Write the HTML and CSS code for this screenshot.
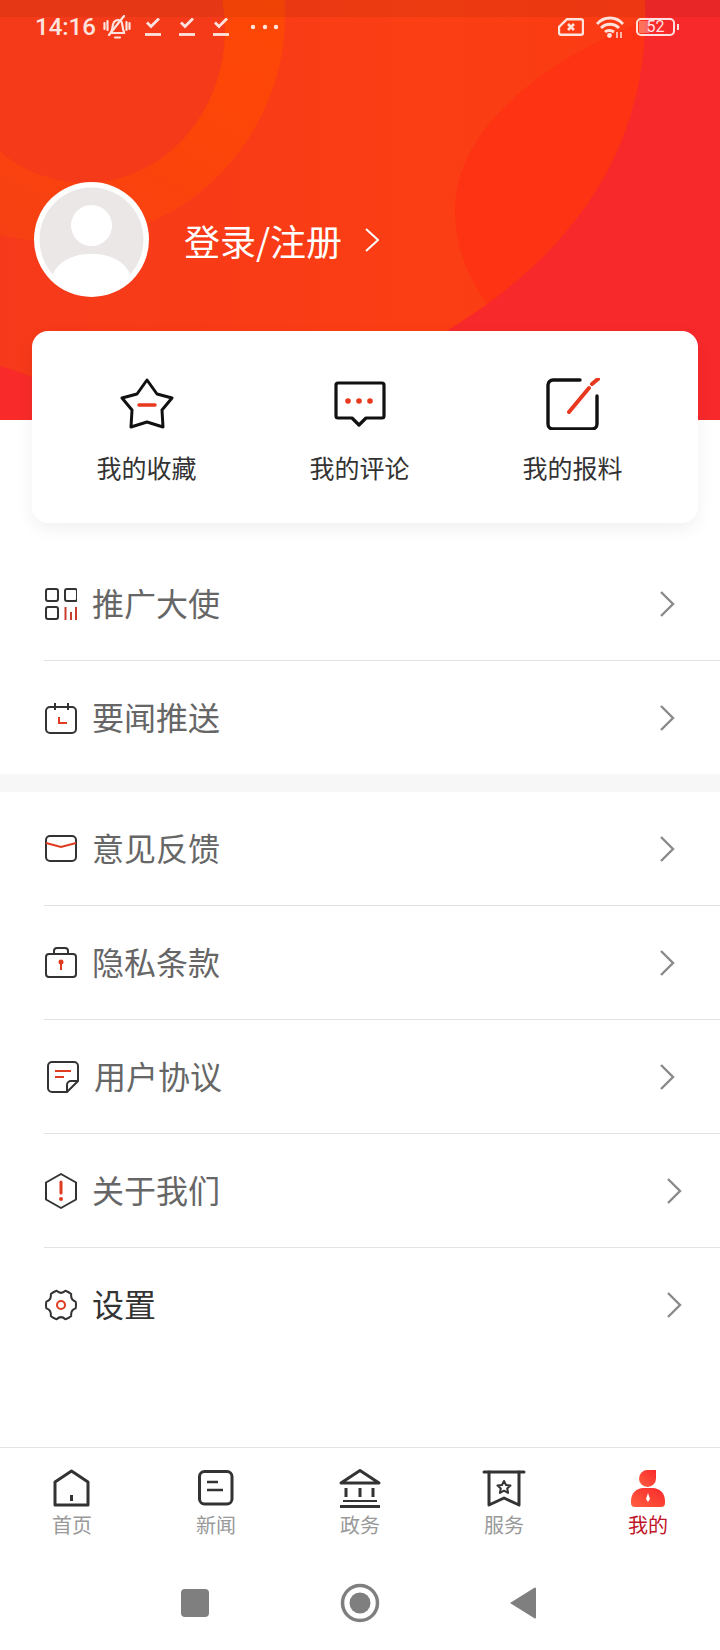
FILE: index.html
```html
<!DOCTYPE html>
<html lang="zh-CN">

<head>
  <meta charset="utf-8">
  <title>我的</title>
  <link rel="stylesheet" href="styles.css">
</head>

<body>
  <div class="page">

    <header class="hero">
      <svg class="heroArt" viewBox="0 0 720 420" width="720" height="420">
        <defs>
          <linearGradient id="heroBase" x1="0" y1="0" x2="1" y2="0">
            <stop offset="0" stop-color="#f6391a" />
            <stop offset=".6" stop-color="#fb3e13" />
            <stop offset="1" stop-color="#fb3a14" />
          </linearGradient>
          <linearGradient id="ringFill" x1=".7" y1="0" x2=".2" y2="1">
            <stop offset="0" stop-color="#fe4905" />
            <stop offset=".55" stop-color="#fc4508" />
            <stop offset="1" stop-color="#f63f16" />
          </linearGradient>
        </defs>
        <rect width="720" height="420" fill="url(#heroBase)" />
        <path d="M46 0L0 73V0z" fill="#ff3d22" />
        <circle cx="58" cy="15" r="227" fill="url(#ringFill)" />
        <ellipse cx="85" cy="30" rx="140" ry="153" fill="#f43a18" />
        <path d="M660 14C540 60 455 130 455 210C455 250 470 285 500 320L700 200V14z" fill="#fd3313" />
        <path d="M645 0C650 130 590 240 459 323C400 360 330 420 300 420H720V0z" fill="#f7292b" />
        <path d="M0 366C14 370 24 374 40 380V420H0z" fill="#f82b2a" />
        <rect width="720" height="17" fill="#000" opacity="0.06" />
      </svg>

      <div class="status">
        <span class="time">14:16</span>
        <svg class="bell" viewBox="0 0 28 24" width="28" height="24" fill="none" stroke="#fff" stroke-width="2.200" stroke-linecap="round">
          <path d="M8 17c2-2 1-7 3-10 2-2 5-2 7-1 2 2 1 8 3 11v1H8z" />
          <path d="M12 22.500h5M1.500 8v6M4.500 6v9M26.500 8v6M23.500 7v8M6 20L21 1" />
        </svg>
        <svg class="tick" viewBox="0 0 16 18" width="16" height="18" fill="none" stroke="#fff" stroke-width="2.800">
          <path d="M2 4.500l4 4 8-8" />
          <path d="M0 16.500h16" />
        </svg>
        <svg class="tick" viewBox="0 0 16 18" width="16" height="18" fill="none" stroke="#fff" stroke-width="2.800">
          <path d="M2 4.500l4 4 8-8" />
          <path d="M0 16.500h16" />
        </svg>
        <svg class="tick" viewBox="0 0 16 18" width="16" height="18" fill="none" stroke="#fff" stroke-width="2.800">
          <path d="M2 4.500l4 4 8-8" />
          <path d="M0 16.500h16" />
        </svg>
        <svg class="dots" viewBox="0 0 30 6" width="30" height="6" fill="#fff">
          <circle cx="3" cy="3" r="2.200" />
          <circle cx="15" cy="3" r="2.200" />
          <circle cx="26" cy="3" r="2.200" />
        </svg>

        <div class="statusRight">
          <svg viewBox="0 0 26 18" width="26" height="18" fill="none" stroke="#fff" stroke-width="2.400">
            <path d="M9 1.200h14a2 2 0 0 1 2 2v11.600a2 2 0 0 1-2 2H3a2 2 0 0 1-2-2V9z" />
            <path d="M10 6l6 6M16 6l-6 6" stroke-width="2.600" />
          </svg>
          <svg viewBox="0 0 28 22" width="28" height="22" fill="none" stroke="#fff" stroke-width="2.800">
            <path d="M1 8c7-8 19-8 26 0M5 12c5-5 13-5 18 0M9 16c2-2 6-2 9 0" />
            <circle cx="13.500" cy="19.500" r="2.400" fill="#fff" stroke="none" />
            <path d="M21 16v6M25 16v6" stroke-width="1.500" />
          </svg>
          <div class="battery"><span class="batteryFill"></span><span class="batteryNum">52</span></div>
        </div>
      </div>

      <div class="profile">
        <svg class="avatar" viewBox="0 0 115 115" width="115" height="115">
          <circle cx="57.500" cy="57.500" r="57.500" fill="#fff" />
          <circle cx="57.500" cy="57.500" r="52" fill="#ebe7e7" />
          <circle cx="57.500" cy="43.500" r="20.500" fill="#fff" />
          <path d="M19 92C30 65 85 65 96 92C85 118 30 118 19 92z" fill="#fff" />
        </svg>
        <span class="loginText">登录/注册</span>
        <svg class="loginArrow" viewBox="0 0 14 24" width="14" height="24" fill="none" stroke="#fff" stroke-width="2">
          <path d="M1 1l12 11L1 23" />
        </svg>
      </div>
    </header>

    <section class="card">
      <div class="cardItem">
        <svg viewBox="0 0 54 52" width="54" height="52" fill="none" stroke="#111" stroke-width="3" stroke-linejoin="round">
          <path d="M27 2l10 14 15 4-10 12 1 17-16-5-16 5 1-17-10-12 15-4z" />
          <path d="M19 27h16" stroke="#e8391f" stroke-width="3.500" stroke-linecap="round" />
        </svg>
        <span class="cardLabel">我的收藏</span>
      </div>
      <div class="cardItem">
        <svg viewBox="0 0 54 52" width="54" height="52" fill="none" stroke="#111" stroke-width="3.200" stroke-linejoin="round">
          <path d="M5 5h44a2 2 0 0 1 2 2v31a2 2 0 0 1-2 2H33l-7 7-7-7H5a2 2 0 0 1-2-2V7a2 2 0 0 1 2-2z" />
          <circle cx="15" cy="23" r="2.800" fill="#e8391f" stroke="none" />
          <circle cx="26" cy="23" r="2.800" fill="#e8391f" stroke="none" />
          <circle cx="37" cy="23" r="2.800" fill="#e8391f" stroke="none" />
        </svg>
        <span class="cardLabel">我的评论</span>
      </div>
      <div class="cardItem">
        <svg viewBox="0 0 54 52" width="54" height="52" fill="none" stroke="#111" stroke-width="3.400" stroke-linecap="round">
          <path d="M34 2H7a5 5 0 0 0-5 5v39a5 5 0 0 0 5 5h39a5 5 0 0 0 5-5V18" />
          <path d="M23 34L43 10M46 6l6-5" stroke="#e8391f" stroke-width="4" />
        </svg>
        <span class="cardLabel">我的报料</span>
      </div>
    </section>

    <ul class="list listFirst">
      <li class="row">
        <svg class="rowIcon" viewBox="0 0 32 32" width="32" height="32" fill="none" stroke="#333" stroke-width="2">
          <rect x="1" y="1" width="12" height="12" rx="2" />
          <rect x="20" y="1" width="12" height="12" rx="2" />
          <rect x="1" y="19" width="12" height="12" rx="2" />
          <path d="M20.500 19v13M26 24v8M31 19v13" stroke="#c8402c" />
        </svg>
        <span class="rowText">推广大使</span>
        <svg class="rowArrow" viewBox="0 0 16 28" width="16" height="28" fill="none" stroke="#8a8a8a" stroke-width="2.400">
          <path d="M2 2l12 12L2 26" />
        </svg>
      </li>
      <li class="row">
        <svg class="rowIcon" viewBox="0 0 32 32" width="32" height="32" fill="none" stroke="#333" stroke-width="2">
          <rect x="1" y="5" width="30" height="26" rx="4" />
          <path d="M10 1v7M23 1v7" />
          <path d="M14 15v6h8" stroke="#e03a20" />
        </svg>
        <span class="rowText">要闻推送</span>
        <svg class="rowArrow" viewBox="0 0 16 28" width="16" height="28" fill="none" stroke="#8a8a8a" stroke-width="2.400">
          <path d="M2 2l12 12L2 26" />
        </svg>
      </li>
    </ul>

    <div class="sectionGap"></div>

    <ul class="list">
      <li class="row">
        <svg class="rowIcon" viewBox="0 0 32 32" width="32" height="32" fill="none" stroke="#333" stroke-width="2">
          <rect x="1" y="3" width="30" height="25" rx="4" />
          <path d="M1 10l15 4 15-4" stroke="#e03a20" />
        </svg>
        <span class="rowText">意见反馈</span>
        <svg class="rowArrow" viewBox="0 0 16 28" width="16" height="28" fill="none" stroke="#8a8a8a" stroke-width="2.400">
          <path d="M2 2l12 12L2 26" />
        </svg>
      </li>
      <li class="row">
        <svg class="rowIcon" viewBox="0 0 32 32" width="32" height="32" fill="none" stroke="#333" stroke-width="2">
          <rect x="1" y="7" width="30" height="23" rx="3" />
          <path d="M9 7V4a3 3 0 0 1 3-3h8a3 3 0 0 1 3 3v3" />
          <circle cx="16" cy="15" r="2.500" fill="#e03a20" stroke="none" />
          <path d="M16 15v8" stroke="#e03a20" />
        </svg>
        <span class="rowText">隐私条款</span>
        <svg class="rowArrow" viewBox="0 0 16 28" width="16" height="28" fill="none" stroke="#8a8a8a" stroke-width="2.400">
          <path d="M2 2l12 12L2 26" />
        </svg>
      </li>
      <li class="row rowShift">
        <svg class="rowIcon" viewBox="0 0 32 32" width="32" height="32" fill="none" stroke="#333" stroke-width="2" stroke-linejoin="round">
          <path d="M20 31H5a4 4 0 0 1-4-4V5a4 4 0 0 1 4-4h22a4 4 0 0 1 4 4v15z" />
          <path d="M31 20h-7a4 4 0 0 0-4 4v7" />
          <path d="M8 10h16M8 16h9" stroke="#e03a20" />
        </svg>
        <span class="rowText">用户协议</span>
        <svg class="rowArrow" viewBox="0 0 16 28" width="16" height="28" fill="none" stroke="#8a8a8a" stroke-width="2.400">
          <path d="M2 2l12 12L2 26" />
        </svg>
      </li>
      <li class="row rowFar">
        <svg class="rowIcon" viewBox="0 0 32 36" width="32" height="36" fill="none" stroke="#333" stroke-width="2" stroke-linejoin="round">
          <path d="M16 1l15 8.500v17L16 35 1 26.500v-17z" />
          <path d="M16 9v11" stroke="#e03a20" stroke-width="3" stroke-linecap="round" />
          <circle cx="16" cy="26" r="2" fill="#e03a20" stroke="none" />
        </svg>
        <span class="rowText">关于我们</span>
        <svg class="rowArrow" viewBox="0 0 16 28" width="16" height="28" fill="none" stroke="#8a8a8a" stroke-width="2.400">
          <path d="M2 2l12 12L2 26" />
        </svg>
      </li>
      <li class="row rowFar">
        <svg class="rowIcon" viewBox="0 0 32 32" width="32" height="32" fill="none" stroke="#333" stroke-width="2" stroke-linejoin="round">
          <path d="M30.600 12.600Q31.400 16 30.600 19.400Q25.500 21 26.200 27Q24 29 20.400 30.300Q16 26 11.600 30.300Q8 29 5.800 27Q6.500 21 1.400 19.400Q.6 16 1.400 12.600Q6.500 11 5.800 5Q8 3 11.600 1.700Q16 6 20.400 1.700Q24 3 26.200 5Q25.500 11 30.600 12.600z" />
          <circle cx="16" cy="16" r="4" stroke="#e03a20" />
        </svg>
        <span class="rowText rowTextDark">设置</span>
        <svg class="rowArrow" viewBox="0 0 16 28" width="16" height="28" fill="none" stroke="#8a8a8a" stroke-width="2.400">
          <path d="M2 2l12 12L2 26" />
        </svg>
      </li>
    </ul>

    <nav class="tabbar">
      <div class="tab">
        <svg viewBox="0 0 44 40" width="44" height="40" fill="none" stroke="#333" stroke-width="3" stroke-linejoin="round">
          <path d="M21.500 3L38 14v23H5V14z" />
          <path d="M21.500 27v6" />
        </svg>
        <span>首页</span>
      </div>
      <div class="tab">
        <svg viewBox="0 0 44 40" width="44" height="40" fill="none" stroke="#333" stroke-width="3">
          <rect x="5.500" y="3.500" width="32.500" height="32.500" rx="5" />
          <path d="M13 14h11M13 22h16" stroke-width="2.400" />
        </svg>
        <span>新闻</span>
      </div>
      <div class="tab">
        <svg viewBox="0 0 44 40" width="44" height="40" fill="none" stroke="#333" stroke-width="3" stroke-linejoin="round">
          <path d="M22 2.500L41 15H3z" />
          <path d="M8 20v9M22 20v9M35 20v9" />
          <path d="M5 33h34" stroke-width="2" />
          <path d="M2 38.500h40" />
        </svg>
        <span>政务</span>
      </div>
      <div class="tab">
        <svg viewBox="0 0 44 40" width="44" height="40" fill="none" stroke="#333" stroke-width="3" stroke-linecap="round" stroke-linejoin="round">
          <path d="M2 4h40" />
          <path d="M7 4v33l15-7 15 7V4" />
          <path d="M22 13l2 4 4.500 .5-3.300 3 .9 4.500-4.100-2.300-4.100 2.300 .9-4.500-3.300-3 4.500-.5z" stroke-width="2" />
        </svg>
        <span>服务</span>
      </div>
      <div class="tab tabActive">
        <svg viewBox="0 0 44 40" width="44" height="40">
          <defs>
            <linearGradient id="mineFill" x1="0" y1="1" x2="1" y2="0">
              <stop offset="0" stop-color="#ff5f3f" />
              <stop offset="1" stop-color="#f8282c" />
            </linearGradient>
          </defs>
          <path d="M30 2v8.500A8.500 8.500 0 1 1 21.500 2z" fill="url(#mineFill)" />
          <path d="M5 33c0-8 6-13 12-13h10c6 0 12 5 12 13v2a4 4 0 0 1-4 4H9a4 4 0 0 1-4-4z" fill="url(#mineFill)" />
          <path d="M22 25l2 6-2 3-2-3z" fill="#fff" />
        </svg>
        <span>我的</span>
      </div>
    </nav>

    <div class="sysnav">
      <svg viewBox="0 0 40 40" width="40" height="40">
        <rect x="6" y="6" width="28" height="28" rx="4" fill="#7f7f7f" />
      </svg>
      <svg viewBox="0 0 40 40" width="40" height="40">
        <circle cx="20" cy="20" r="17.500" fill="none" stroke="#7f7f7f" stroke-width="3.500" />
        <circle cx="20" cy="20" r="10.500" fill="#7f7f7f" />
      </svg>
      <svg class="backKey" viewBox="0 0 40 40" width="40" height="40">
        <path d="M33 4.500a1 1 0 0 1 1 1v29a1 1 0 0 1-1 1q-.5 0-1-.5L8 20l24-15q.5-.5 1-.5z" fill="#7f7f7f" />
      </svg>
    </div>

  </div>
</body>

</html>
```

FILE: styles.css
```css
* {
  box-sizing: border-box;
}

body {
  margin: 0;
  background: #fff;
  font-family: "Noto Sans CJK SC", "Noto Sans", sans-serif;
}

ul {
  margin: 0;
  padding: 0;
  list-style: none;
}

svg {
  display: block;
  flex: none;
}

.page {
  width: 720px;
  height: 1650px;
  display: flex;
  flex-direction: column;
  overflow: hidden;
}

/* top red area */
.hero {
  position: relative;
  height: 420px;
  padding-top: 15px;
  flex: none;
}

.heroArt {
  position: absolute;
  top: 0;
  left: 0;
}

.status {
  position: relative;
  display: flex;
  align-items: center;
  height: 24px;
  padding: 0 45px 0 35px;
  opacity: .86;
}

.time {
  width: 68px;
  color: #fff;
  font-family: Roboto, sans-serif;
  font-size: 24px;
  font-weight: 500;
}

.bell {
  margin-right: 14px;
}

.tick {
  margin-right: 18px;
}

.dots {
  margin-left: 3px;
}

.statusRight {
  display: flex;
  align-items: center;
  gap: 12px;
  margin-left: auto;
}

.battery {
  position: relative;
  width: 39px;
  height: 18px;
  border: 2px solid #fff;
  border-radius: 5px;
  color: #fff;
  font-family: Roboto, sans-serif;
  font-size: 16px;
  line-height: 14px;
  text-align: center;
}

.battery:after {
  content: "";
  position: absolute;
  top: 4px;
  right: -6px;
  width: 2px;
  height: 6px;
  background: #fff;
}

.batteryFill {
  position: absolute;
  top: 1px;
  bottom: 1px;
  left: 1px;
  width: 10px;
  background: #fff;
  opacity: .35;
}

.batteryNum {
  position: relative;
}

.profile {
  position: relative;
  display: flex;
  align-items: center;
  margin-top: 143px;
  padding-left: 34px;
  color: #fff;
}

.loginText {
  margin-left: 35px;
  font-size: 36px;
}

.loginArrow {
  margin-left: 23px;
}

/* white card over the hero */
.card {
  position: relative;
  display: grid;
  grid-template-columns: repeat(3, 1fr);
  flex: none;
  height: 192px;
  margin: -89px 22px 0 32px;
  padding: 47px 19px 0 8px;
  background: #fff;
  border-radius: 16px;
  box-shadow: 0 6px 18px rgba(0, 0, 0, .06);
}

.cardItem {
  display: flex;
  flex-direction: column;
  align-items: center;
}

.cardLabel {
  margin-top: 19px;
  color: #333;
  font-size: 25px;
  line-height: 36px;
}

.listFirst {
  margin-top: 24px;
}

.row {
  display: flex;
  align-items: center;
  height: 114px;
  margin-left: 44px;
  padding-right: 45px;
  border-bottom: 1px solid #e3e3e3;
}

.list .row:last-child {
  border-bottom: 0;
}

.rowIcon {
  margin-left: 1px;
}

.rowText {
  margin: -4px 0 0 15px;
  color: #666;
  font-size: 32px;
}

.rowTextDark {
  color: #333;
}

.rowArrow {
  margin-left: auto;
}

.rowShift .rowIcon {
  margin-left: 3px;
}

.rowFar {
  padding-right: 38px;
}

.sectionGap {
  flex: none;
  height: 18px;
  margin-top: -1px;
  background: #f7f7f7;
}

/* bottom tabs */
.tabbar {
  display: grid;
  grid-template-columns: repeat(5, 144px);
  flex: none;
  margin-top: auto;
  height: 113px;
  padding-top: 20px;
  border-top: 1px solid #e3e3e3;
}

.tab {
  display: flex;
  flex-direction: column;
  align-items: center;
  color: #999;
  font-size: 20px;
  line-height: 28px;
}

.tab span {
  margin-top: 3px;
}

.tabActive {
  color: #c01428;
}

.sysnav {
  display: flex;
  align-items: center;
  flex: none;
  gap: 125px;
  height: 90px;
  padding: 0 0 4px 175px;
}

.backKey {
  margin-left: -3px;
}
```
